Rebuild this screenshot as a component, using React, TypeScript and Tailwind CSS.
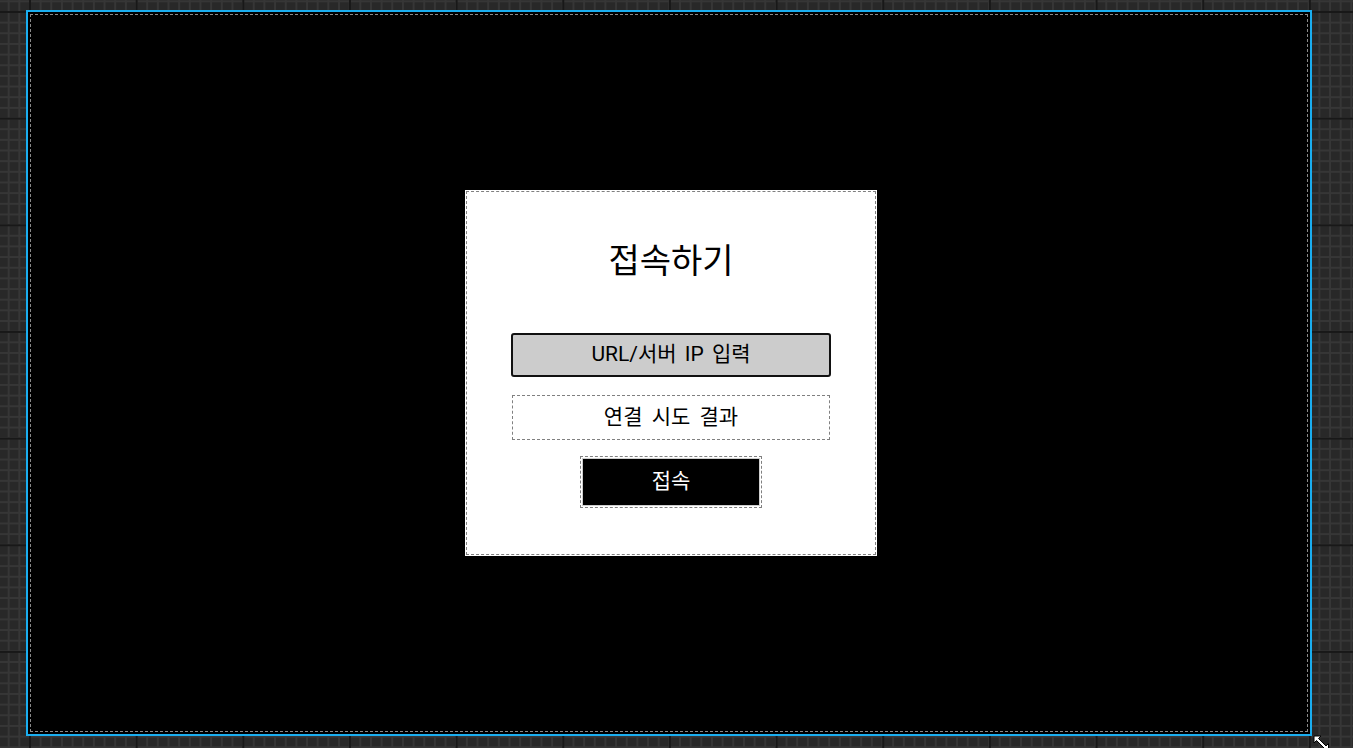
import React from "react";

const FONT = "font-['Roboto','Noto_Sans_CJK_KR',sans-serif]";

function ResizeCursor() {
  return (
    <svg className="absolute left-[1312px] top-[734px]" width="22" height="16" viewBox="0 0 22 16">
      <path d="M2 2 L9 2 L6.5 4.5 L14 12 L16.5 9.5 L16.5 16.5 L9.5 16.5 L12 14 L4.5 6.5 L2 9 Z" fill="#fff" stroke="#000" strokeWidth="1" />
    </svg>
  );
}

export default function App() {
  return (
    <div
      className={`relative w-[1353px] h-[748px] overflow-hidden bg-[#282828] bg-[linear-gradient(#181818_2px,transparent_2px),linear-gradient(90deg,#181818_2px,transparent_2px),linear-gradient(#363636_2px,transparent_2px),linear-gradient(90deg,#363636_2px,transparent_2px)] [background-size:106.667px_106.667px,106.667px_106.667px,10.667px_10.667px,10.667px_10.667px] [background-position:29px_11px,29px_11px,29px_11px,29px_11px] pl-[26px] pt-[10px] ${FONT}`}
    >
      {/* frame */}
      <div className="w-[1286px] h-[726px] border-2 border-[#1aaef0] bg-black p-[2px]">
        <div className="w-full h-full border border-dashed border-[#8a8a8a] flex items-center justify-center">
          {/* card */}
          <div className="w-[412px] h-[366px] bg-white p-[1px] ml-[4px]">
            <div className="w-full h-full border border-dashed border-[#808080] flex flex-col items-center pt-[48px]">
              <h1 className="text-[34px] leading-[42px] text-black">접속하기</h1>

              <div className="mt-[51px] w-[320px] h-[44px] rounded-[3px] border-2 border-[#111] bg-[#cccccc] flex items-center justify-center text-[21px] text-black [word-spacing:3px]">
                URL/서버 IP 입력
              </div>

              <div className="mt-[18px] w-[318px] h-[45px] border border-dashed border-[#808080] bg-white flex items-center justify-center text-[21px] text-black [word-spacing:4px]">
                연결 시도 결과
              </div>

              <div className="mt-[16px] w-[182px] h-[52px] border border-dashed border-[#808080] p-[1px] flex">
                <button className="flex-1 bg-black border border-[#cfcfcf] text-white text-[21px] flex items-center justify-center">
                  접속
                </button>
              </div>
            </div>
          </div>
        </div>
      </div>
      <ResizeCursor />
    </div>
  );
}
